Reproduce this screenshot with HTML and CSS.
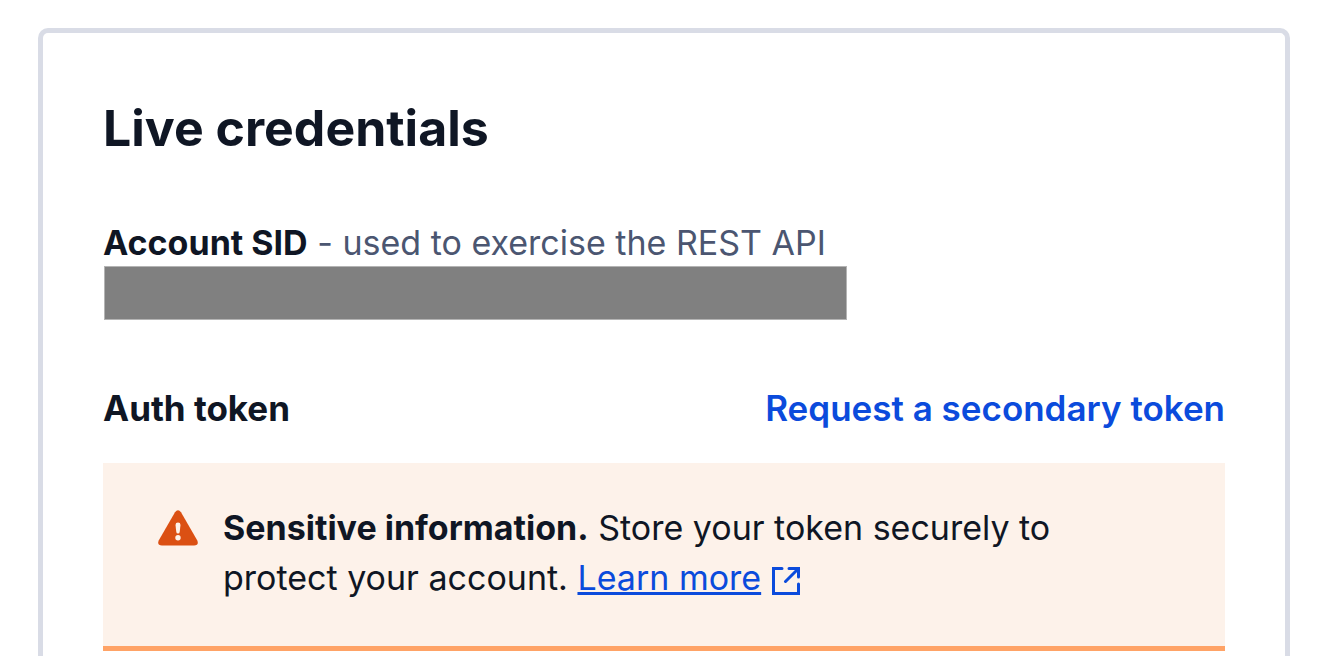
FILE: index.html
```html
<!DOCTYPE html>
<html lang="en">
<head>
<meta charset="utf-8">
<title>Live credentials</title>
<link rel="stylesheet" href="styles.css">
</head>
<body>
<main class="card">
  <h1 class="title">Live credentials</h1>
  <section class="account">
    <p class="account-label"><strong>Account SID</strong> <span class="hint">- used to exercise the REST API</span></p>
    <div class="redacted"></div>
  </section>
  <section class="token">
    <div class="token-head">
      <h2 class="label">Auth token</h2>
      <a class="request" href="#">Request a secondary token</a>
    </div>
    <div class="callout">
      <svg class="warning" viewBox="0 0 40 36" aria-hidden="true">
        <path d="M17 2.2Q20-1.6 23 2.2L39.3 30.5Q41.2 35.5 36 35.5H4Q-1.2 35.5.7 30.5Z" fill="#db5013"/>
        <path d="M17.5 15Q17.5 12.6 20 12.6T22.5 15L21.7 22Q21.5 23.6 20 23.6T18.3 22Z" fill="#fdf2ea"/>
        <circle cx="20" cy="27.8" r="2.7" fill="#fdf2ea"/>
      </svg>
      <p class="message"><strong>Sensitive information.</strong> Store your token securely to protect your account. <a class="learn" href="#"><span class="learn-text">Learn more</span><svg class="external" viewBox="0 0 28 28" aria-hidden="true"><path d="M10 1.5H1.5V26.5H26.5V17M17 1.5H26.5V10M26 2L13.5 14.5" fill="none" stroke="currentColor" stroke-width="3" stroke-linecap="round" stroke-linejoin="miter"/></svg></a></p>
    </div>
  </section>
</main>
</body>
</html>
```
FILE: styles.css
```css
* { box-sizing: border-box; }
body { margin: 0; padding: 28px 38px 0; background: #fff; color: #0f1624; font: 34px/50px Inter, "Liberation Sans", sans-serif; }
strong { font-weight: 700; }
.card { min-height: calc(100vh - 28px); padding: 65px 60px 0; border: 5px solid #d9dce6; border-bottom: 0; border-radius: 10px 10px 0 0; }
.title { margin: 0; font-size: 50px; line-height: 60px; font-weight: 700; }
.account { padding-top: 62px; }
.account-label { margin: 0; line-height: 46px; }
.label { margin: 0; font-size: 35px; line-height: 50px; font-weight: 700; }
.hint { color: #4b5671; }
.redacted { width: 743px; max-width: 100%; height: 54px; margin-left: 1px; background: #808080; border: 1px solid #b4b4b4; }
.token { padding-top: 63px; }
.token-head { display: flex; justify-content: space-between; }
.request { color: #0b4bdc; font-size: 35px; font-weight: 600; text-decoration: none; }
.callout { display: flex; gap: 25px; margin-top: 30px; padding: 40px 55px 43px; background: #fdf2ea; border-bottom: 5px solid #ffa366; }
.warning { width: 40px; height: 36px; margin-top: 7px; flex: none; }
.message { margin: 0; flex: 1; max-width: 850px; }
.learn { color: #0b4bdc; text-decoration: none; }
.learn-text { text-decoration: underline; text-decoration-thickness: 3px; }
.external { width: 28px; height: 28px; margin-left: 11px; vertical-align: -5px; }
```
